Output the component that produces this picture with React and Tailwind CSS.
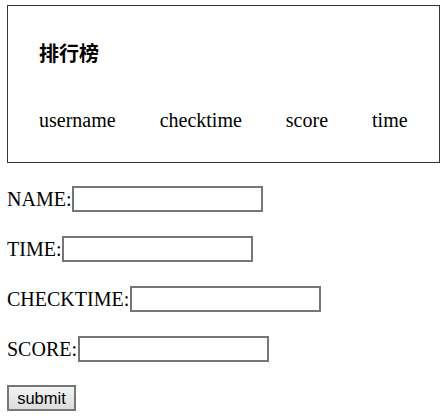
export default function App() {
  const serif = { fontFamily: '"Liberation Serif", "Times New Roman", serif' };
  const fields = ["NAME", "TIME", "CHECKTIME", "SCORE"];
  return (
    <div className="w-[444px] h-[420px] bg-white text-black overflow-hidden" style={serif}>
      <div className="ml-[7px] mt-[5px] w-[433px] h-[158px] border border-[#333333] pl-[31px] pt-[35px] flex flex-col">
        <div
          className="text-[20px] leading-[24px] font-bold"
          style={{ fontFamily: '"Noto Sans CJK SC", "Noto Sans", sans-serif' }}
        >
          排行榜
        </div>
        <div className="mt-[43px] flex gap-[44px] text-[20px] leading-[24px]">
          <span>username</span>
          <span>checktime</span>
          <span>score</span>
          <span>time</span>
        </div>
      </div>
      <div className="pl-[7px] mt-[23px] flex flex-col gap-[24px]">
        {fields.map((f) => (
          <div key={f} className="flex items-center h-[26px] text-[20px] leading-[24px]">
            <span>{f}:</span>
            <input
              type="text"
              className="ml-[1px] w-[191px] h-[26px] border-2 border-[#767676] bg-white outline-none"
            />
          </div>
        ))}
        <div className="-mt-[1px]">
          <button
            className="w-[69px] h-[26px] border-2 border-[#767676] bg-gradient-to-b from-[#f3f3f3] to-[#dcdcdc] text-[16.5px] leading-[20px] text-black"
            style={{ fontFamily: '"Liberation Sans", Arial, sans-serif' }}
          >
            submit
          </button>
        </div>
      </div>
    </div>
  );
}
